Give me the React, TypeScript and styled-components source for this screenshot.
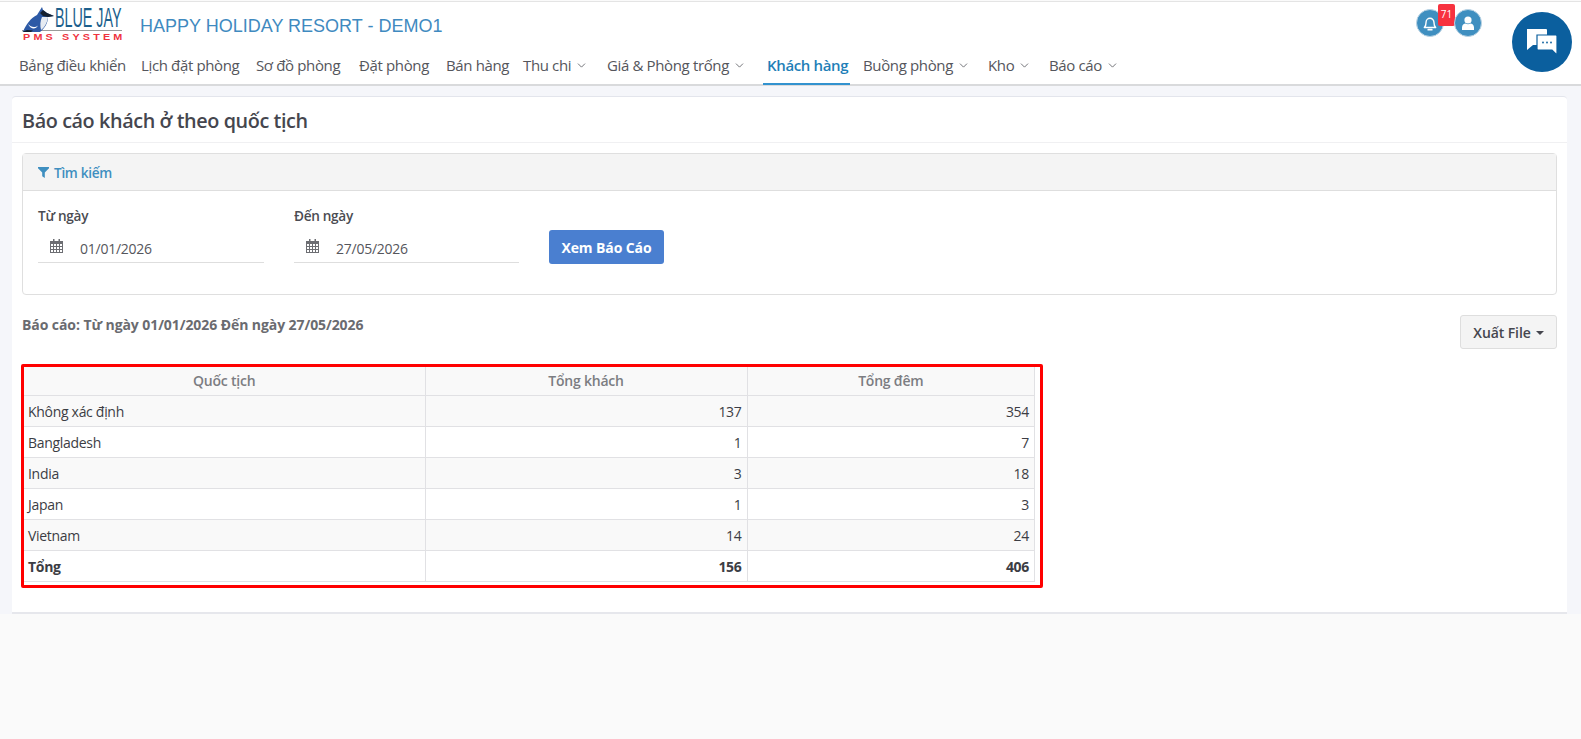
import React from 'react';
import styled, { createGlobalStyle } from 'styled-components';
import { ChevronDown } from 'lucide-react';

const GlobalStyle = createGlobalStyle`
  html, body {
    margin: 0;
    padding: 0;
    background-color: #fafafa;
    font-family: 'Open Sans', 'Noto Sans', sans-serif;
    font-size: 14px;
    color: #3f4047;
  }
  * { box-sizing: border-box; }
`;

const Page = styled.div`
  min-height: 738px;
  border-top: 1px solid #e4e4e4;
  margin-top: 1px;
`;

const Header = styled.header`
  height: 84px;
  background-color: #ffffff;
  border-bottom: 2px solid #d9dadc;
  padding: 0 19px;
  display: flex;
  flex-direction: column;
  position: relative;
`;

const TopRow = styled.div`
  height: 41px;
  display: flex;
  align-items: flex-start;
`;

const Logo = styled.div`
  width: 103px;
  height: 40px;
  margin-left: 3px;
  display: flex;
  flex-direction: column;
  position: relative;
`;

const LogoName = styled.div`
  font-family: 'Liberation Sans', sans-serif;
  font-size: 27px;
  line-height: 24px;
  height: 24px;
  color: #1c5f8c;
  margin-top: 4px;
  margin-left: 33px;
  white-space: nowrap;
  transform: scaleX(0.53);
  transform-origin: left center;
`;

const LogoRule = styled.div`
  height: 1px;
  width: 100px;
  background-color: #9a9a9a;
`;

const LogoTag = styled.div`
  font-family: 'Liberation Sans', sans-serif;
  font-size: 8.5px;
  font-weight: 700;
  line-height: 8px;
  letter-spacing: 2.5px;
  color: #f0333f;
  white-space: nowrap;
  margin-top: 2px;
  margin-left: 1px;
  transform: scaleX(1.27);
  transform-origin: left center;
`;

const LogoBird = styled.div`
  position: absolute;
  left: 0;
  top: 2px;
`;

const HotelName = styled.div`
  margin-left: 15px;
  margin-top: 13px;
  font-family: 'Liberation Sans', sans-serif;
  font-size: 18px;
  line-height: 22px;
  color: #3f8ac0;
  white-space: nowrap;
`;

const Actions = styled.div`
  position: absolute;
  top: 7px;
  left: 1416px;
  display: flex;
  gap: 10px;
`;

const RoundIcon = styled.div`
  width: 28px;
  height: 28px;
  border-radius: 50%;
  background-color: #3f8fc0;
  border: 1px solid #b9d3e4;
  display: flex;
  align-items: center;
  justify-content: center;
  position: relative;
`;

const Badge = styled.span`
  position: absolute;
  top: -6px;
  left: 21px;
  width: 17px;
  height: 22px;
  background-color: #f7323f;
  border-radius: 2px;
  color: #ffffff;
  font-size: 10px;
  line-height: 20px;
  text-align: center;
`;

const ChatBubble = styled.div`
  position: absolute;
  top: 10px;
  left: 1512px;
  width: 60px;
  height: 60px;
  border-radius: 50%;
  background-color: #0b5f9e;
  display: flex;
  align-items: center;
  justify-content: center;
  z-index: 2;
`;

const Nav = styled.nav`
  flex: 1;
  display: flex;
  align-items: flex-start;
`;

const NavItem = styled.div<{ $active?: boolean; $width: number; $lead?: number }>`
  width: ${p => p.$width}px;
  flex: none;
  display: flex;
  align-items: center;
  gap: 4px;
  height: 43px;
  padding-top: 5px;
  padding-left: ${p => p.$lead ?? 0}px;
  white-space: nowrap;
  font-size: 15px;
  letter-spacing: -0.36px;
  font-weight: ${p => (p.$active ? 600 : 400)};
  color: ${p => (p.$active ? '#1f7fb8' : '#55565c')};
  border-bottom: 2px solid ${p => (p.$active ? '#3292cf' : 'transparent')};
`;

const Content = styled.main`
  background-color: #f5f6fa;
  padding: 10px 14px 0 12px;
`;

const Card = styled.section`
  background-color: #ffffff;
  border-top: 1px solid #e3e5ec;
  border-bottom: 2px solid #e6e7ec;
  border-radius: 4px 4px 0 0;
  height: 518px;
`;

const CardTitle = styled.h1`
  margin: 0;
  height: 46px;
  padding: 0 10px;
  border-bottom: 1px solid #f0f0f2;
  font-size: 19.8px;
  font-weight: 600;
  line-height: 48px;
  letter-spacing: -0.4px;
  color: #45464e;
`;

const CardBody = styled.div`
  padding: 10px 10px 0;
`;

const Panel = styled.div`
  height: 142px;
  border: 1px solid #dfdfdf;
  border-radius: 4px;
`;

const PanelHeader = styled.div`
  height: 37px;
  background-color: #f4f4f4;
  border-bottom: 1px solid #dedede;
  padding-left: 15px;
  display: flex;
  align-items: center;
  gap: 5px;
  font-size: 13.6px;
  font-weight: 600;
  letter-spacing: -0.3px;
  color: #3f8fc0;
`;

const PanelBody = styled.div`
  padding: 15px 15px 0;
  display: flex;
  align-items: flex-start;
`;

const Field = styled.div<{ $width: number }>`
  width: ${p => p.$width}px;
  margin-right: 30px;
`;

const FieldLabel = styled.div`
  font-size: 13.6px;
  font-weight: 600;
  line-height: 20px;
  letter-spacing: -0.3px;
  color: #4b4c52;
  margin-bottom: 5px;
`;

const DateInput = styled.div`
  height: 32px;
  border-bottom: 1px solid #dedede;
  padding: 4px 0 0 12px;
  display: flex;
  align-items: center;
  gap: 17px;
  font-size: 14px;
  letter-spacing: -0.25px;
  color: #55565c;

  svg {
    margin-top: -5px;
  }
`;

const PrimaryButton = styled.button`
  width: 115px;
  height: 34px;
  margin-top: 24px;
  border: none;
  border-radius: 3px;
  background-color: #4a7fd0;
  color: #ffffff;
  font-family: inherit;
  font-size: 14px;
  font-weight: 700;
  letter-spacing: -0.1px;
`;

const ReportRow = styled.div`
  display: flex;
  justify-content: space-between;
  align-items: flex-start;
  margin-top: 20px;
  height: 49px;
`;

const ReportText = styled.div`
  font-size: 14px;
  font-weight: 700;
  line-height: 20px;
  letter-spacing: -0.08px;
  color: #6a6b70;
`;

const ExportButton = styled.button`
  width: 97px;
  height: 34px;
  background-color: #f4f4f4;
  border: 1px solid #dedede;
  border-radius: 3px;
  font-family: inherit;
  font-size: 14px;
  font-weight: 600;
  letter-spacing: -0.1px;
  color: #45464e;
  display: flex;
  align-items: center;
  justify-content: center;
  gap: 5px;
`;

const Caret = styled.span`
  width: 0;
  height: 0;
  border-left: 4px solid transparent;
  border-right: 4px solid transparent;
  border-top: 4px solid #45464e;
  margin-top: 2px;
`;

const TableFrame = styled.div`
  width: 1022px;
  height: 224px;
  border: 3px solid #ff0000;
  border-radius: 2px;
  margin-left: -1px;
  padding-right: 5px;
`;

const Table = styled.table`
  width: 100%;
  border-collapse: collapse;
  table-layout: fixed;
`;

const Th = styled.th`
  height: 28px;
  padding: 0;
  background-color: #f9f9f9;
  border: 1px solid #e1e1e4;
  border-width: 0 1px 1px 0;
  font-size: 14px;
  font-weight: 600;
  letter-spacing: -0.22px;
  color: #7c7d82;
`;

const Td = styled.td<{ $right?: boolean; $bold?: boolean; $striped?: boolean }>`
  height: 31px;
  padding: 1px 5px 0 4px;
  background-color: ${p => (p.$striped ? '#f9f9f9' : '#ffffff')};
  border: 1px solid #e1e1e4;
  border-width: 0 1px 1px 0;
  text-align: ${p => (p.$right ? 'right' : 'left')};
  font-size: 14px;
  font-weight: ${p => (p.$bold ? 700 : 400)};
  letter-spacing: -0.3px;
  color: #3c3d44;
`;

const navItems = [
  { label: 'Bảng điều khiển', width: 122 },
  { label: 'Lịch đặt phòng', width: 115 },
  { label: 'Sơ đồ phòng', width: 103 },
  { label: 'Đặt phòng', width: 87 },
  { label: 'Bán hàng', width: 77 },
  { label: 'Thu chi', width: 84, caret: true },
  { label: 'Giá & Phòng trống', width: 156, caret: true },
  { label: 'Khách hàng', width: 87, lead: 4, active: true },
  { label: 'Buồng phòng', width: 138, lead: 13, caret: true },
  { label: 'Kho', width: 61, caret: true },
  { label: 'Báo cáo', width: 82, caret: true },
];

const rows = [
  { name: 'Không xác định', guests: 137, nights: 354 },
  { name: 'Bangladesh', guests: 1, nights: 7 },
  { name: 'India', guests: 3, nights: 18 },
  { name: 'Japan', guests: 1, nights: 3 },
  { name: 'Vietnam', guests: 14, nights: 24 },
];

const CalendarIcon = () => (
  <svg width="13" height="14" viewBox="0 0 13 14" fill="#6d6e73">
    <path d="M3 0h1.5v2.5H3zM8.5 0H10v2.5H8.5z" />
    <path
      fillRule="evenodd"
      d="M0 2h13v12H0zM1 5v2h2V5zm3 0v2h2V5zm3 0v2h2V5zm3 0v2h2V5zM1 8v2h2V8zm3 0v2h2V8zm3 0v2h2V8zm3 0v2h2V8zM1 11v2h2v-2zm3 0v2h2v-2zm3 0v2h2v-2zm3 0v2h2v-2z"
    />
  </svg>
);

const FilterIcon = () => (
  <svg width="11" height="11" viewBox="0 0 11 11" fill="#3f8fc0">
    <path d="M0 0h11v1.200L6.800 5.600V11L4.200 9.200V5.600L0 1.200z" />
  </svg>
);

const BellIcon = () => (
  <svg width="14" height="15" viewBox="0 0 16 17" fill="none" stroke="#ffffff" strokeWidth="1.6">
    <path d="M1.500 13c1.500-1.500 2-3 2-6a4.500 4.500 0 0 1 9 0c0 3 .5 4.500 2 6z" strokeLinejoin="round" />
    <path d="M6 15.600h4" strokeLinecap="round" strokeWidth="2" />
  </svg>
);

const UserIcon = () => (
  <svg width="14" height="14" viewBox="0 0 14 14" fill="#ffffff">
    <circle cx="7" cy="4" r="3.600" />
    <path d="M1 14v-2.500C1 9 3 7.500 4.500 7.500c1.500 1 3.500 1 5 0C11 7.500 13 9 13 11.500V14z" />
  </svg>
);

const ChatIcon = () => (
  <svg width="32" height="28" viewBox="0 0 32 28">
    <path d="M1 1h19a1 1 0 0 1 1 1v15H7l-6 5z" fill="#ffffff" />
    <path d="M11 7h19a1 1 0 0 1 1 1v14v5l-5-5H12a1 1 0 0 1-1-1z" fill="#ffffff" stroke="#0b5f9e" strokeWidth="1.200" />
    <circle cx="17" cy="14.500" r="0.9" fill="#0b5f9e" />
    <circle cx="21" cy="14.500" r="0.9" fill="#0b5f9e" />
    <circle cx="25" cy="14.500" r="0.9" fill="#0b5f9e" />
  </svg>
);

const BirdIcon = () => (
  <svg width="33" height="28" viewBox="0 0 33 28">
    <path d="M1 28C4 20 9 14 15 11L20 3l1 3 4 3 7 3-6 1c0 6-3 11-8 15z" fill="#2d5aa6" />
    <path d="M21 6l4 3 7 3-6 1-5-1-3-3z" fill="#15202f" />
    <path d="M20 13h6c-.5 5-3 10-7 13-1-4-1-9 1-13z" fill="#e6ebf2" />
    <path d="M6 20c3 3.500 7 4 10 1.500-2 4-7 4.500-10-1.500z" fill="#ffffff" />
    <path d="M0 28h9l2-1.500-6-.5z" fill="#15202f" />
  </svg>
);

export default function App() {
  return (
    <Page>
      <GlobalStyle />
      <Header>
        <TopRow>
          <Logo>
            <LogoBird>
              <BirdIcon />
            </LogoBird>
            <LogoName>BLUE JAY</LogoName>
            <LogoRule />
            <LogoTag>PMS SYSTEM</LogoTag>
          </Logo>
          <HotelName>HAPPY HOLIDAY RESORT - DEMO1</HotelName>
        </TopRow>
        <Actions>
          <RoundIcon>
            <BellIcon />
            <Badge>71</Badge>
          </RoundIcon>
          <RoundIcon>
            <UserIcon />
          </RoundIcon>
        </Actions>
        <ChatBubble>
          <ChatIcon />
        </ChatBubble>
        <Nav>
          {navItems.map(item => (
            <NavItem key={item.label} $active={item.active} $width={item.width} $lead={item.lead}>
              {item.label}
              {item.caret && <ChevronDown size={13} strokeWidth={1.5} />}
            </NavItem>
          ))}
        </Nav>
      </Header>
      <Content>
        <Card>
          <CardTitle>Báo cáo khách ở theo quốc tịch</CardTitle>
          <CardBody>
            <Panel>
              <PanelHeader>
                <FilterIcon />
                Tìm kiếm
              </PanelHeader>
              <PanelBody>
                <Field $width={226}>
                  <FieldLabel>Từ ngày</FieldLabel>
                  <DateInput>
                    <CalendarIcon />
                    01/01/2026
                  </DateInput>
                </Field>
                <Field $width={225}>
                  <FieldLabel>Đến ngày</FieldLabel>
                  <DateInput>
                    <CalendarIcon />
                    27/05/2026
                  </DateInput>
                </Field>
                <PrimaryButton>Xem Báo Cáo</PrimaryButton>
              </PanelBody>
            </Panel>
            <ReportRow>
              <ReportText>Báo cáo: Từ ngày 01/01/2026 Đến ngày 27/05/2026</ReportText>
              <ExportButton>
                Xuất File
                <Caret />
              </ExportButton>
            </ReportRow>
            <TableFrame>
              <Table>
                <colgroup>
                  <col width="401" />
                  <col width="322" />
                  <col />
                </colgroup>
                <thead>
                  <tr>
                    <Th>Quốc tịch</Th>
                    <Th>Tổng khách</Th>
                    <Th>Tổng đêm</Th>
                  </tr>
                </thead>
                <tbody>
                  {rows.map((row, index) => (
                    <tr key={row.name}>
                      <Td $striped={index % 2 === 0}>{row.name}</Td>
                      <Td $striped={index % 2 === 0} $right>{row.guests}</Td>
                      <Td $striped={index % 2 === 0} $right>{row.nights}</Td>
                    </tr>
                  ))}
                  <tr>
                    <Td $bold>Tổng</Td>
                    <Td $bold $right>156</Td>
                    <Td $bold $right>406</Td>
                  </tr>
                </tbody>
              </Table>
            </TableFrame>
          </CardBody>
        </Card>
      </Content>
    </Page>
  );
}
